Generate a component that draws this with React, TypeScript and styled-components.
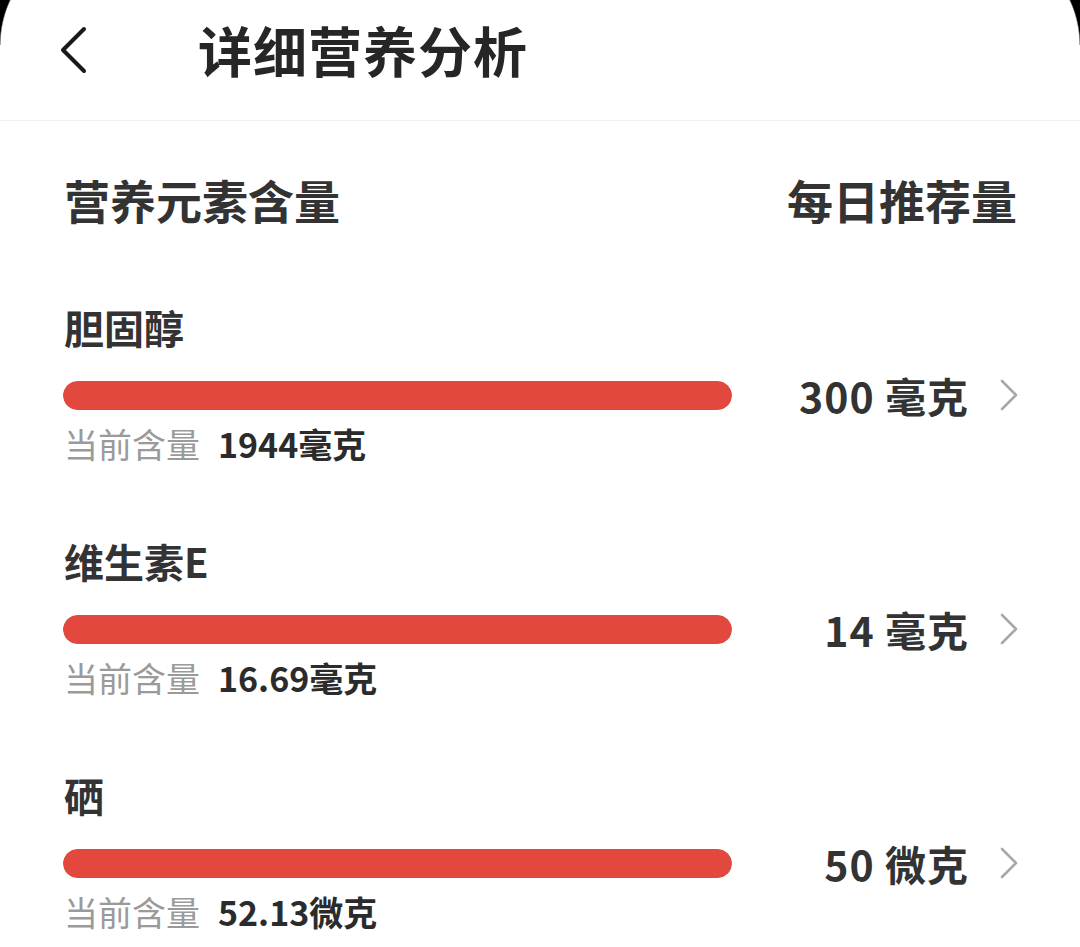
import React from "react";
import styled, { createGlobalStyle } from "styled-components";

const GlobalStyle = createGlobalStyle`
  html, body {
    margin: 0;
    padding: 0;
    background: #fff;
  }
  body {
    font-family: "Noto Sans CJK SC", "Noto Sans", sans-serif;
    color: #333;
  }
`;

type Nutrient = {
  name: string;
  current: string;
  daily: string;
};

const nutrients: Nutrient[] = [
  { name: "胆固醇", current: "1944毫克", daily: "300 毫克" },
  { name: "维生素E", current: "16.69毫克", daily: "14 毫克" },
  { name: "硒", current: "52.13微克", daily: "50 微克" },
];

export default function App() {
  return (
    <>
      <GlobalStyle />
      <Screen>
        <Header>
          <BackButton aria-label="返回">
            <svg width="28" height="48" viewBox="0 0 28 48">
              <polyline
                points="24,3 3,24 24,45"
                fill="none"
                stroke="#1a1a1a"
                strokeWidth="4"
                strokeLinecap="round"
                strokeLinejoin="round"
              />
            </svg>
          </BackButton>
          <Title>详细营养分析</Title>
        </Header>

        <Content>
          <ColumnHeads>
            <HeadText>营养元素含量</HeadText>
            <HeadText>每日推荐量</HeadText>
          </ColumnHeads>

          {nutrients.map((n) => (
            <Item key={n.name}>
              <ItemName>{n.name}</ItemName>
              <BarTrack>
                <BarFill style={{ width: "100%" }} />
              </BarTrack>
              <Daily>
                <DailyValue>{n.daily}</DailyValue>
                <svg width="20" height="34" viewBox="0 0 20 34">
                  <polyline
                    points="3,3 17,17 3,31"
                    fill="none"
                    stroke="#a8a8a8"
                    strokeWidth="2.6"
                    strokeLinecap="round"
                    strokeLinejoin="round"
                  />
                </svg>
              </Daily>
              <Current>
                <CurrentLabel>当前含量</CurrentLabel>
                <CurrentValue>{n.current}</CurrentValue>
              </Current>
            </Item>
          ))}
        </Content>
      </Screen>
    </>
  );
}

const Screen = styled.div`
  position: relative;
  width: 1080px;
  height: 947px;
  overflow: hidden;
  background: #fff;

  /* rounded corners of the phone display */
  &::before,
  &::after {
    content: "";
    position: absolute;
    top: 0;
    width: 24px;
    height: 45px;
    pointer-events: none;
  }
  &::before {
    left: 0;
    background: radial-gradient(
      circle 106px at 106px 45px,
      transparent 105px,
      #000 106.5px
    );
  }
  &::after {
    right: 0;
    background: radial-gradient(
      circle 106px at -82px 45px,
      transparent 105px,
      #000 106.5px
    );
  }
`;

const Header = styled.header`
  display: flex;
  align-items: center;
  height: 100px;
  padding: 0 0 20px 60px;
  border-bottom: 1.5px solid #efefef;
`;

const BackButton = styled.button`
  display: flex;
  align-items: center;
  justify-content: center;
  padding: 0;
  margin: 0 110px 0 0;
  width: 28px;
  height: 48px;
  border: none;
  background: none;
`;

const Title = styled.h1`
  margin: 0;
  font-size: 54px;
  line-height: 64px;
  font-weight: 700;
  color: #262626;
  letter-spacing: 1px;
`;

const Content = styled.main`
  padding: 48px 63px 0 64px;
`;

const ColumnHeads = styled.div`
  display: flex;
  justify-content: space-between;
  align-items: center;
  margin-bottom: 72px;
`;

const HeadText = styled.h2`
  margin: 0;
  font-size: 46px;
  line-height: 60px;
  font-weight: 700;
  color: #333;
`;

const Item = styled.section`
  display: grid;
  grid-template-columns: 668px 1fr;
  grid-template-rows: 52px 40px 44px;
  row-gap: 22px;
  margin-bottom: 54px;
  align-items: center;
`;

const ItemName = styled.div`
  grid-column: 1;
  font-size: 40px;
  line-height: 52px;
  font-weight: 700;
  color: #333;
`;

const BarTrack = styled.div`
  grid-column: 1;
  grid-row: 2;
  height: 29px;
  margin-left: -1px;
  border-radius: 15px;
  background: #f1f1f1;
  overflow: hidden;
`;

const BarFill = styled.div`
  height: 100%;
  border-radius: 15px;
  background: #e2483e;
`;

const Daily = styled.div`
  grid-column: 2;
  grid-row: 2;
  display: flex;
  align-items: center;
  justify-content: flex-end;
  gap: 30px;
  margin-right: -2px;
`;

const DailyValue = styled.span`
  font-size: 41px;
  line-height: 40px;
  font-weight: 700;
  letter-spacing: 1px;
  color: #333;
`;

const Current = styled.div`
  grid-column: 1;
  grid-row: 3;
  display: flex;
  align-items: baseline;
  gap: 18px;
  margin-top: -30px;
`;

const CurrentLabel = styled.span`
  font-size: 34px;
  line-height: 44px;
  color: #9a9a9a;
`;

const CurrentValue = styled.span`
  font-size: 34px;
  line-height: 44px;
  font-weight: 700;
  color: #2b2b2b;
`;
